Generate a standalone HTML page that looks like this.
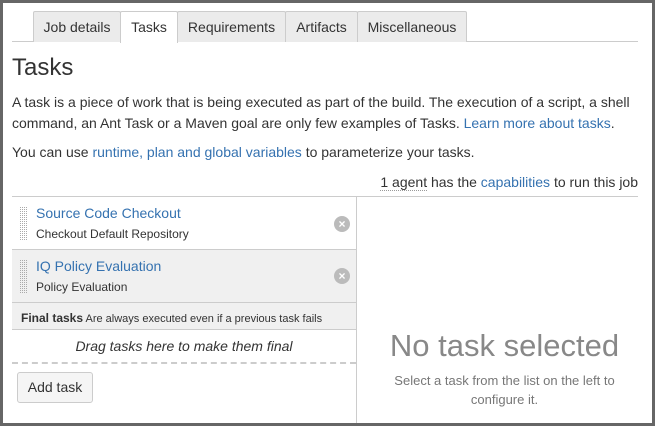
<!DOCTYPE html>
<html><head><style>
*{margin:0;padding:0;box-sizing:border-box}
body{width:655px;height:426px;background:#666;font-family:"Liberation Sans",sans-serif;overflow:hidden;position:relative}
.page{position:absolute;left:3px;top:3px;width:649px;height:420px;background:#fff}
.a{position:absolute;white-space:nowrap}
.tab{position:absolute;top:8px;height:31px;border:1px solid #ccc;border-bottom:none;background:#ebebeb;font-size:14px;color:#333;text-align:center;line-height:30px;border-radius:2px 2px 0 0}
.l{color:#3572b0}
p{font-size:14px;color:#333;line-height:21px}
.ic{position:absolute;width:16px;height:16px;border-radius:50%;background:#bbb;color:#fff;font-size:12px;font-weight:bold;text-align:center;line-height:16px}
.grip{position:absolute;width:7px;height:33px;--bg:#fff;background:linear-gradient(90deg,transparent 1px,var(--bg) 1px) 0 0/2px 2px,linear-gradient(transparent 1px,var(--bg) 1px) 0 0/2px 2px,#aaa}
</style></head><body>
<div class="page">
<div class="a" style="left:9px;top:38px;width:626px;height:1px;background:#ccc"></div>
<div class="tab" style="left:30px;width:88px">Job details</div>
<div class="tab" style="left:117px;width:58px;background:#fff;height:32px">Tasks</div>
<div class="tab" style="left:174px;width:109px">Requirements</div>
<div class="tab" style="left:282px;width:73px">Artifacts</div>
<div class="tab" style="left:354px;width:110px">Miscellaneous</div>
<div class="a" style="left:9px;top:51px;font-size:24px;color:#333">Tasks</div>
<p class="a" style="left:9px;top:89px">A task is a piece of work that is being executed as part of the build. The execution of a script, a shell<br>command, an Ant Task or a Maven goal are only few examples of Tasks. <span class="l">Learn more about tasks</span>.</p>
<p class="a" style="left:9px;top:139px">You can use <span class="l">runtime, plan and global variables</span> to parameterize your tasks.</p>
<p class="a" style="right:14px;top:169px"><span style="border-bottom:1px dotted #999">1 agent</span> has the <span class="l">capabilities</span> to run this job</p>
<div class="a" style="left:9px;top:193px;width:626px;height:1px;background:#ccc"></div>
<div class="a" style="left:353px;top:194px;width:1px;height:226px;background:#ccc"></div>
<div class="a" style="left:9px;top:194px;width:344px;height:53px;border-bottom:1px solid #ccc"></div>
<div class="grip" style="left:17px;top:204px"></div>
<div class="a l" style="left:33px;top:202px;font-size:14px">Source Code Checkout</div>
<div class="a" style="left:33px;top:224px;font-size:12px;color:#333">Checkout Default Repository</div>
<div class="ic" style="left:331px;top:213px">×</div>
<div class="a" style="left:9px;top:247px;width:344px;height:53px;background:#f0f0f0;border-bottom:1px solid #ccc"></div>
<div class="grip" style="left:17px;top:257px;--bg:#f0f0f0"></div>
<div class="a l" style="left:33px;top:255px;font-size:14px">IQ Policy Evaluation</div>
<div class="a" style="left:33px;top:277px;font-size:12px;color:#333">Policy Evaluation</div>
<div class="ic" style="left:331px;top:265px">×</div>
<div class="a" style="left:9px;top:300px;width:344px;height:27px;background:#f0f0f0;border-bottom:1px solid #ccc"></div>
<div class="a" style="left:18px;top:308px;font-size:11px;color:#333"><b style="font-size:12px">Final tasks</b> Are always executed even if a previous task fails</div>
<div class="a" style="left:9px;top:327px;width:344px;height:34px;border-bottom:2px dashed #ccc;text-align:center;font-size:14px;font-style:italic;color:#333;line-height:32px">Drag tasks here to make them final</div>
<div class="a" style="left:14px;top:369px;width:76px;height:31px;border:1px solid #ccc;border-radius:3px;background:#f5f5f5;font-size:14px;color:#333;text-align:center;line-height:29px">Add task</div>
<div class="a" style="left:354px;top:325px;width:295px;text-align:center;font-size:31px;color:#888">No task selected</div>
<div class="a" style="left:354px;top:368px;width:295px;text-align:center;font-size:13px;color:#777;line-height:19px;white-space:normal">Select a task from the list on the left to<br>configure it.</div>
</div>
</body></html>
